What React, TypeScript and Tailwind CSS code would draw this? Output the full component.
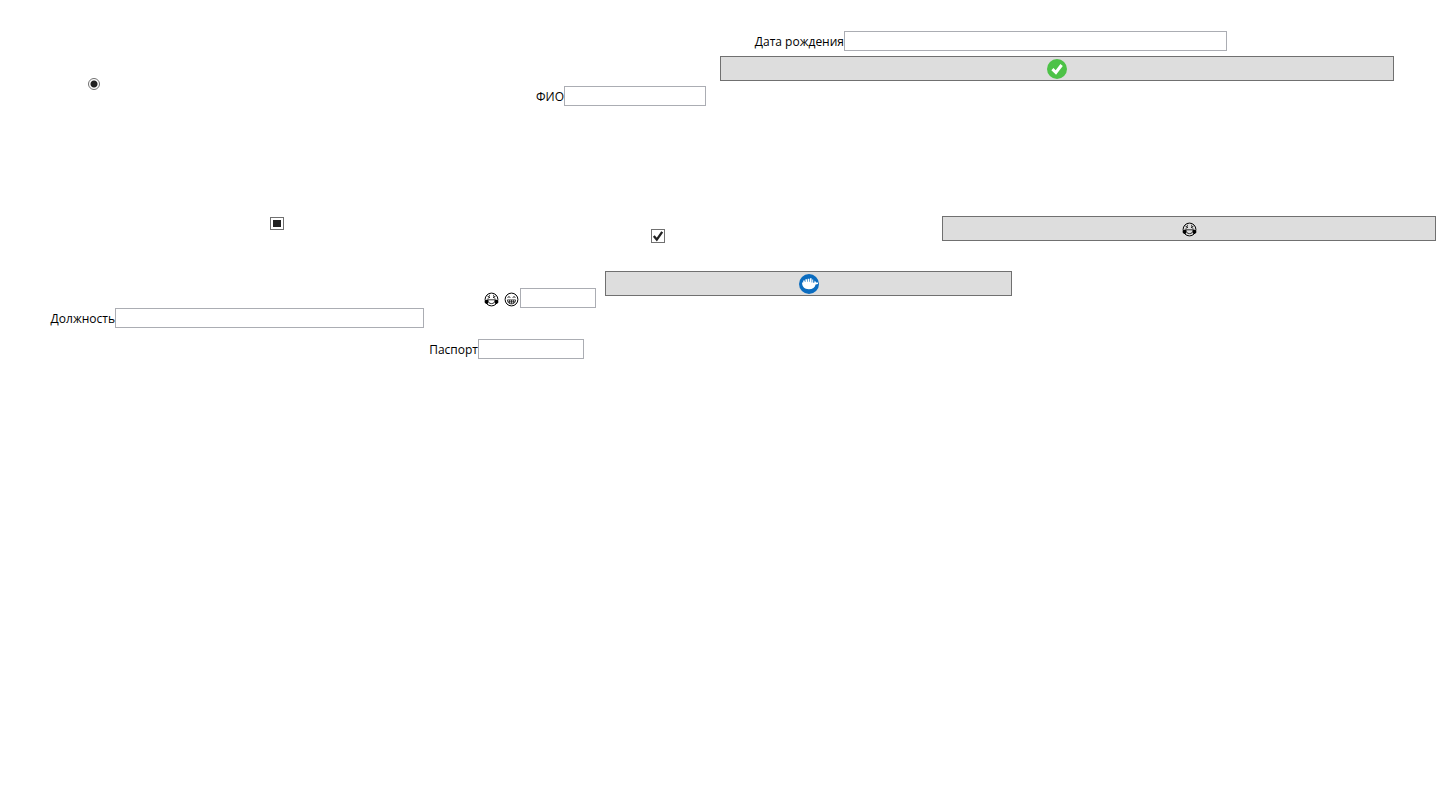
import React from "react";

type FieldProps = {
  id: string;
  label: React.ReactNode;
  labelClass: string;
};

function Field({ id, label, labelClass }: FieldProps) {
  return (
    <div className="flex min-w-0 items-center">
      <label htmlFor={id} className={`flex h-5 shrink-0 items-center justify-end pt-0.5 whitespace-nowrap ${labelClass}`}>
        {label}
      </label>
      <input
        id={id}
        type="text"
        className="h-5 w-0 min-w-0 flex-1 border border-[#abadb3] bg-white px-1 outline-none focus:border-[#569de5]"
      />
    </div>
  );
}

function BarButton({ label, children }: { label: string; children: React.ReactNode }) {
  return (
    <button
      type="button"
      aria-label={label}
      className="flex h-[25px] w-full items-center justify-center border border-[#707070] bg-[#dddddd] hover:bg-[#bee6fd]"
    >
      {children}
    </button>
  );
}

function CheckCircle() {
  return (
    <svg width="20" height="20" viewBox="0 0 20 20" aria-hidden="true">
      <circle cx="10" cy="10" r="10" fill="#4dc247" />
      <path d="M5.4 10.1 8.9 13.5 14.6 6" fill="none" stroke="#fff" strokeWidth="3" />
    </svg>
  );
}

function WhaleCircle() {
  return (
    <svg width="20" height="20" viewBox="0 0 20 20" aria-hidden="true">
      <circle cx="10" cy="10" r="10" fill="#0b6cbf" />
      <path
        d="M3 8.4H4.2V6.6h1.6v1.4h.6V5.2h1.7v2.6h.6V4.8h1.7v3h.6V4.2h1.6v4.2h.6V5.4h1v3.4h1l.6-2.4 1.3 2.2H19v1.4l-2.4.6c-.6 3-2.8 4.7-6.8 4.7-4.3 0-6.6-2.2-6.8-6.7z"
        fill="#fff"
      />
    </svg>
  );
}

function TearsFace() {
  return (
    <svg width="15" height="15" viewBox="0 0 15 15" fill="none" stroke="#000" aria-hidden="true">
      <circle cx="7.5" cy="7.5" r="6.4" strokeWidth="1" />
      <path d="M3.5 4.2 6 5.2 3.7 6.4M11.5 4.2 9 5.2 11.3 6.4M5 3.3H6M9 3.3H10" strokeWidth="0.8" />
      <path d="M3.8 7.8H11.2C11 10.4 9.6 11.6 7.5 11.6S4 10.4 3.8 7.8z" strokeWidth="0.8" />
      <path
        d="M3.8 7.6C1.8 7.7.5 8.7.6 10.1.7 11.4 2.3 12.4 3.6 11.8 4.8 11 4.4 9 3.8 7.6zM11.2 7.6c2 .1 3.3 1.1 3.2 2.5-.1 1.3-1.7 2.3-3 1.7-1.2-.8-.8-2.8-.2-4.2z"
        fill="#000"
        stroke="none"
      />
    </svg>
  );
}

function GrinFace() {
  return (
    <svg width="15" height="15" viewBox="0 0 15 15" fill="none" stroke="#000" aria-hidden="true">
      <circle cx="7.5" cy="7.5" r="6.4" strokeWidth="1" />
      <path d="M3.8 5.7C4.2 4.3 5.7 4.3 6.1 5.7M8.9 5.7c.4-1.4 1.9-1.4 2.3 0" strokeWidth="0.9" />
      <path d="M3.4 7.9H11.6C11.5 10.4 9.8 11.9 7.5 11.9S3.5 10.4 3.4 7.9zM3.7 9.8H11.3M5.6 8v3.5M7.5 8v3.8M9.4 8v3.5" strokeWidth="0.7" />
    </svg>
  );
}

const boxClass =
  "peer col-start-1 row-start-1 w-[14px] appearance-none border border-[#707070] bg-white";

export default function App() {
  return (
    <main className="min-h-screen bg-white pt-[31px] font-['Open_Sans','Noto_Sans',sans-serif] text-xs text-black">
      <form onSubmit={(e) => e.preventDefault()}>
        <section className="grid grid-cols-[538fr_168fr_14fr_674fr_54fr] items-start *:min-w-0">
          <div className="pt-[47px] pl-[88px]">
            <input
              type="radio"
              name="choice"
              aria-label="Выбор"
              defaultChecked
              className="block size-3 appearance-none rounded-full border border-[#707070] bg-white checked:bg-[radial-gradient(circle,#212121_3px,white_4px)]"
            />
          </div>
          <div className="pt-[55px]">
            <Field id="name" label="ФИО" labelClass="w-[26px]" />
          </div>
          <div className="col-start-4 space-y-[5px]">
            <div className="grid grid-cols-[39fr_468fr_167fr] *:min-w-0">
              <div className="col-start-2">
                <Field id="birthday" label="Дата рождения" labelClass="w-[85px]" />
              </div>
            </div>
            <BarButton label="Подтвердить">
              <CheckCircle />
            </BarButton>
          </div>
        </section>

        <section className="mt-[110px] grid grid-cols-[270fr_381fr_291fr_494fr_12fr] items-start *:min-w-0">
          <div className="col-start-2 grid justify-start pt-px">
            <input
              type="checkbox"
              aria-label="Частично"
              className={`${boxClass} h-[13px]`}
              ref={(el) => {
                if (el) el.indeterminate = true;
              }}
            />
            <span className="pointer-events-none col-start-1 row-start-1 hidden h-[7px] w-2 place-self-center bg-[#212121] peer-indeterminate:block" />
          </div>
          <div className="grid justify-start pt-[13px]">
            <input type="checkbox" aria-label="Отмечено" defaultChecked className={`${boxClass} h-[14px]`} />
            <svg
              viewBox="0 0 14 14"
              aria-hidden="true"
              className="pointer-events-none col-start-1 row-start-1 hidden size-[14px] peer-checked:block"
            >
              <path d="M2.8 7 5.8 10.6 11.2 2.8" fill="none" stroke="#212121" strokeWidth="2.3" />
            </svg>
          </div>
          <BarButton label="Слёзы радости">
            <span className="pt-0.5">
              <TearsFace />
            </span>
          </BarButton>
        </section>

        <section className="mt-7 grid grid-cols-[54fr_370fr_8fr_164fr_9fr_407fr_436fr] items-start *:min-w-0">
          <div className="col-start-2 pt-[37px]">
            <Field id="position" label="Должность" labelClass="w-[61px]" />
          </div>
          <div className="col-start-4 space-y-[31px] pt-[17px]">
            <div className="grid grid-cols-[52fr_112fr] *:min-w-0">
              <div className="col-start-2">
                <Field
                  id="mood"
                  label={
                    <span role="img" aria-label="Настроение" className="flex gap-[5px] pr-px">
                      <TearsFace />
                      <GrinFace />
                    </span>
                  }
                  labelClass="w-9"
                />
              </div>
            </div>
            <div className="grid grid-cols-[152fr_12fr] *:min-w-0">
              <Field id="passport" label="Паспорт" labelClass="w-[46px]" />
            </div>
          </div>
          <div className="col-start-6">
            <BarButton label="Контейнер">
              <WhaleCircle />
            </BarButton>
          </div>
        </section>
      </form>
    </main>
  );
}
